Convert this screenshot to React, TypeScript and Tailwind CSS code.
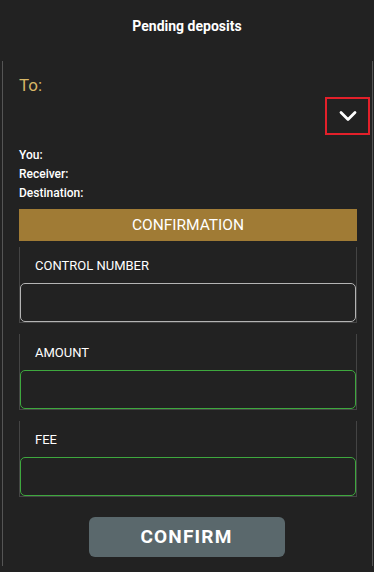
import React from "react";

const FIELDS = [
  { label: "CONTROL NUMBER", border: "border-[#b4b4b4]" },
  { label: "AMOUNT", border: "border-[#3ea83e]" },
  { label: "FEE", border: "border-[#3ea83e]" },
];

export default function App() {
  return (
    <div className="w-[374px] h-[572px] bg-[#222222] text-white overflow-hidden font-['Roboto',sans-serif]">
      <div className="h-[61px] flex justify-center pt-[17px]">
        <h1 className="text-[14px] font-bold leading-[18px]">Pending deposits</h1>
      </div>
      <div className="ml-[2px] mr-[1px] h-[505px] border-l border-r border-[#555555] flex flex-col">
        <div className="ml-[16px] mt-[13px] text-[17px] leading-[22px] text-[#d6b767]">To:</div>
        <div className="flex justify-end mr-[2px] mt-[1px]">
          <button className="w-[45px] h-[38px] border-2 border-[#e3202a] flex items-center justify-center">
            <svg width="20" height="12" viewBox="0 0 20 12" fill="none">
              <path d="M3 2.5l7 7 7-7" stroke="white" strokeWidth="2.8" strokeLinecap="round" strokeLinejoin="round" />
            </svg>
          </button>
        </div>
        <div className="ml-[16px] mt-[11px] text-[12px] leading-[19px] font-medium">
          <div>You:</div>
          <div>Receiver:</div>
          <div>Destination:</div>
        </div>
        <div className="ml-[16px] w-[338px] mt-[6px] h-[32px] bg-[#a07b35] flex items-center justify-center text-[15.5px] leading-[20px]">
          CONFIRMATION
        </div>
        <div className="ml-[16px] w-[338px] mt-[6px] flex flex-col gap-[11px]">
          {FIELDS.map((f) => (
            <div key={f.label} className="h-[76px] border-l border-r border-b border-[#444444] flex flex-col">
              <div className="h-[36px] pl-[15px] pt-[11px] text-[13px] leading-[16px]">{f.label}</div>
              <input className={`h-[40px] rounded-[5px] border ${f.border} bg-transparent outline-none`} />
            </div>
          ))}
        </div>
        <div className="flex justify-center mt-[20px] pr-[2px]">
          <button className="w-[196px] h-[40px] rounded-[6px] bg-[#5a686c] text-[19px] font-bold leading-[24px] tracking-[1.2px]">
            CONFIRM
          </button>
        </div>
      </div>
    </div>
  );
}
